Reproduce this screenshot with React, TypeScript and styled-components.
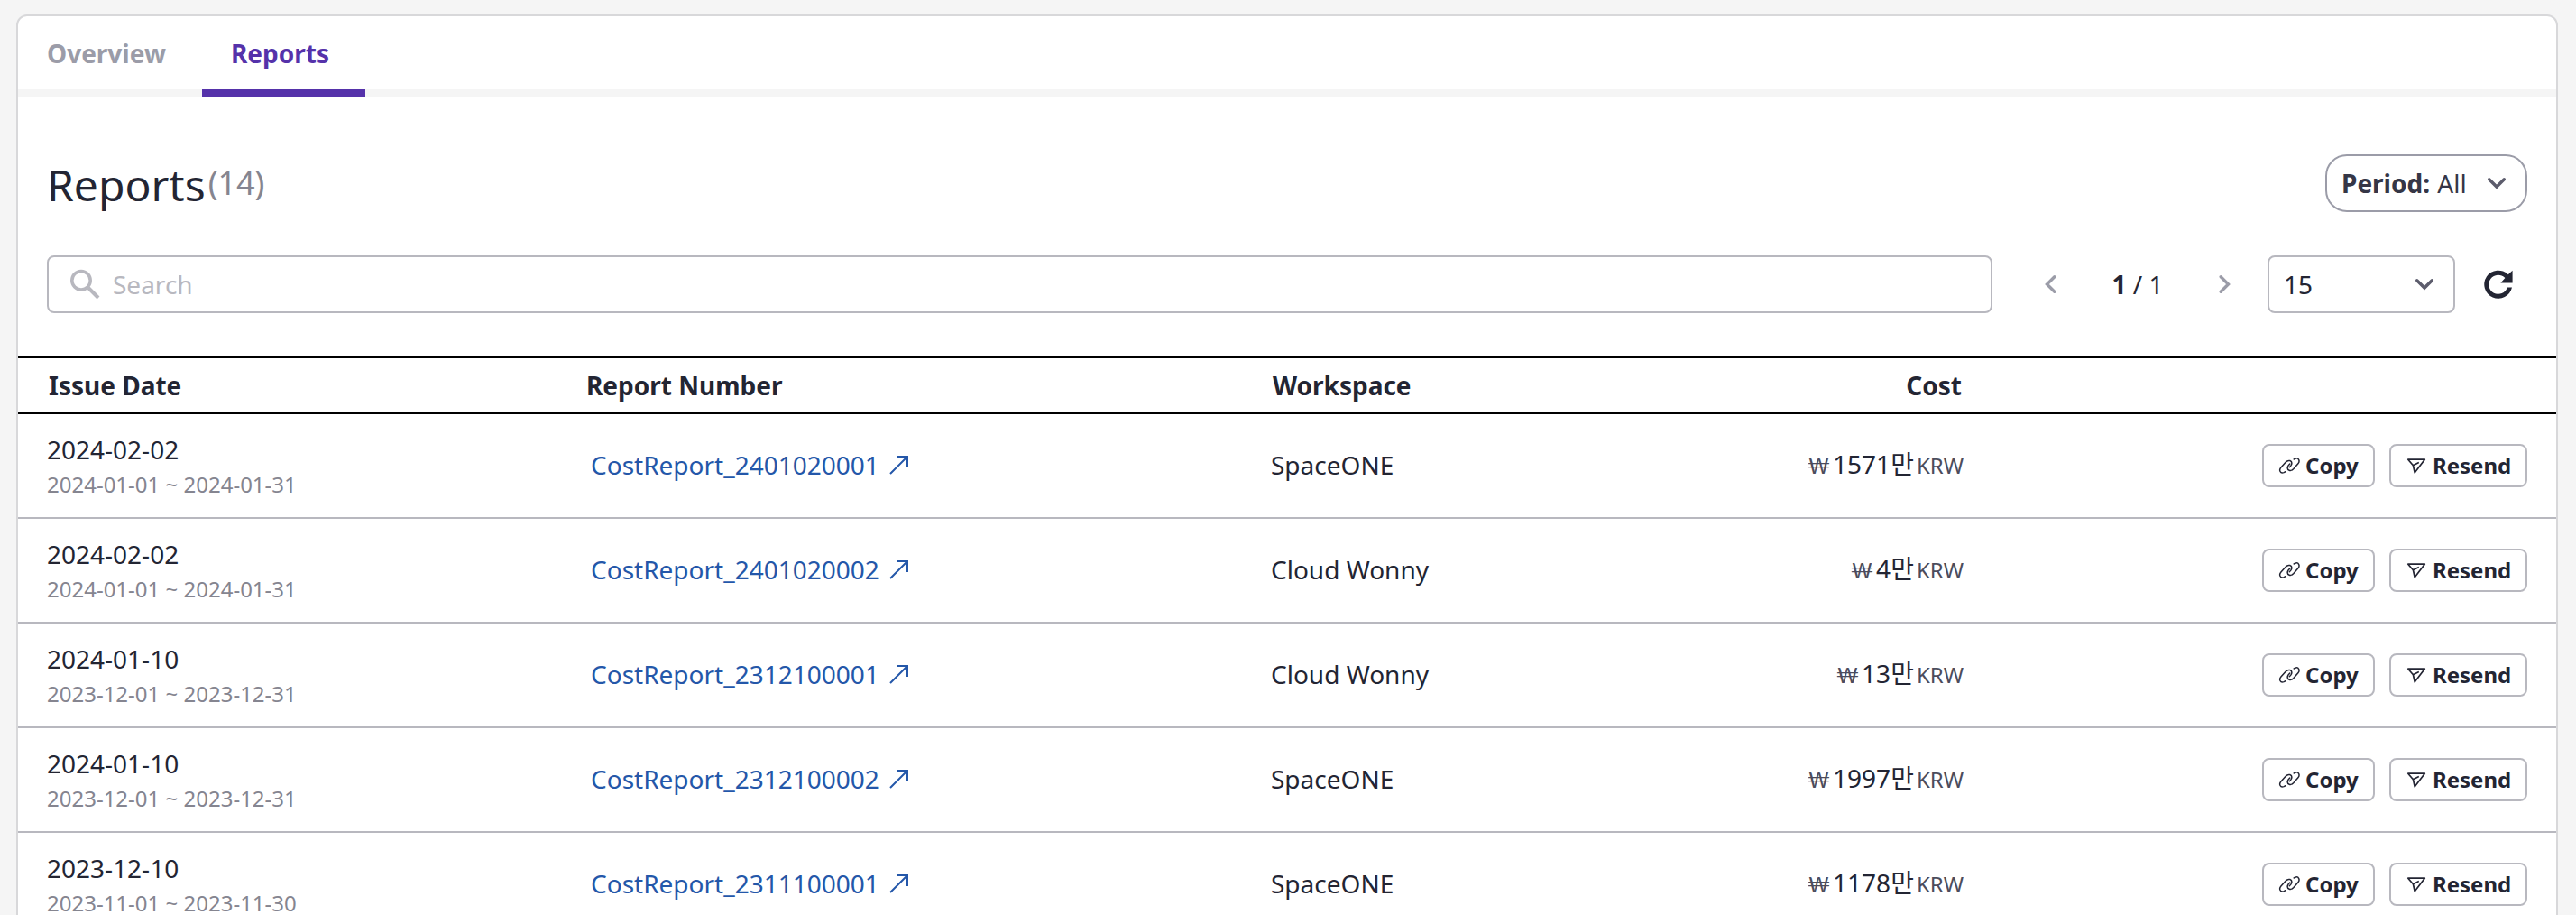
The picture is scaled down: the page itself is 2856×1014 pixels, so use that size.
import React from 'react';
import styled, { createGlobalStyle } from 'styled-components';

const GlobalStyle = createGlobalStyle`
  * { box-sizing: border-box; }
  body {
    margin: 0;
    background: #f5f5f5;
    font-family: "Noto Sans", "Noto Sans CJK KR", sans-serif;
    font-size: 28px;
    color: #232533;
  }
`;

const Page = styled.div`
  height: 1014px;
  padding: 16px 20px 0 18px;
  overflow: hidden;
`;

const Card = styled.main`
  height: 1100px;
  border: 2px solid #d8d8da;
  border-radius: 12px;
  background: #fff;
  overflow: hidden;
`;

const TabBar = styled.nav`
  display: flex;
  height: 89px;
  box-shadow: inset 0 -8px 0 #f5f5f5;
`;

const Tab = styled.button<{ $active?: boolean; $width: number }>`
  width: ${(p) => p.$width}px;
  padding: 0 0 0 32px;
  border: 0;
  border-bottom: 8px solid ${(p) => (p.$active ? '#5532aa' : 'transparent')};
  background: none;
  color: ${(p) => (p.$active ? '#5532aa' : '#9b9ca8')};
  font: 700 28px/44px "Noto Sans", sans-serif;
  text-align: left;
`;

const Heading = styled.header`
  display: flex;
  align-items: center;
  justify-content: space-between;
  height: 64px;
  margin: 64px 32px 0;
`;

const Title = styled.h1`
  display: flex;
  align-items: flex-start;
  height: 60px;
  margin: 0;
  font-weight: 400;
  font-size: 48px;
  line-height: 60px;
`;

const TitleText = styled.span`
  padding-top: 2px;
`;

const Count = styled.span`
  margin-left: 3px;
  color: #858590;
  font-size: 36px;
`;

const PeriodButton = styled.button`
  display: flex;
  align-items: center;
  justify-content: space-between;
  width: 224px;
  height: 64px;
  padding: 0 21px 0 16px;
  border: 2px solid #9b9ca8;
  border-radius: 24px;
  background: #fff;
  color: #353646;
  font: 400 28px/40px "Noto Sans", sans-serif;
`;

const PeriodLabel = styled.b`
  margin-right: 1px;
`;

const Toolbar = styled.div`
  display: flex;
  align-items: center;
  height: 64px;
  margin: 48px 32px 0;
`;

const SearchBox = styled.div`
  display: flex;
  align-items: center;
  width: 2157px;
  height: 64px;
  padding-left: 24px;
  gap: 13px;
  border: 2px solid #b8b8bf;
  border-radius: 8px;
  color: #b8b8bf;
`;

const Pager = styled.div`
  display: flex;
  align-items: center;
  justify-content: space-between;
  width: 206px;
  margin: 0 41px 0 58px;
`;

const PageSize = styled.div`
  display: flex;
  align-items: center;
  justify-content: space-between;
  width: 208px;
  height: 64px;
  padding: 0 21px 0 16px;
  border: 2px solid #b8b8bf;
  border-radius: 8px;
`;

const RefreshButton = styled.button`
  display: flex;
  margin-left: 24px;
  padding: 0;
  border: 0;
  background: none;
`;

const Row = styled.div<{ $head?: boolean }>`
  display: grid;
  grid-template-columns: 596px 761px 559px 214px 1fr;
  align-items: center;
  height: ${(p) => (p.$head ? 64 : 116)}px;
  margin-top: ${(p) => (p.$head ? 48 : 0)}px;
  padding: 0 32px;
  border: 0 solid ${(p) => (p.$head ? '#000' : '#b8b8bf')};
  border-width: ${(p) => (p.$head ? '2px 0' : '0 0 2px')};
  font-weight: ${(p) => (p.$head ? 700 : 400)};
  line-height: 40px;
`;

const HeadCell = styled.span<{ $right?: boolean }>`
  padding: ${(p) => (p.$right ? '0 7px 0 0' : '0 0 0 2px')};
  text-align: ${(p) => (p.$right ? 'right' : 'left')};
`;

const DateCell = styled.div`
  display: flex;
  flex-direction: column;
`;

const DateRange = styled.span`
  color: #858590;
  font-size: 24px;
  line-height: 37px;
`;

const ReportLink = styled.a`
  display: flex;
  align-items: center;
  gap: 9px;
  padding: 0 0 2px 7px;
  color: #2457a9;
`;

const Workspace = styled.span`
  padding-bottom: 2px;
`;

const CostCell = styled.div`
  display: flex;
  justify-content: flex-end;
  align-items: baseline;
  gap: 3px;
  padding: 0 5px 2px 0;
`;

const Unit = styled.span`
  color: #4c4c5c;
  font-size: 24px;
`;

const CurrencySymbol = styled(Unit)`
  font-family: Lato, "Noto Sans", sans-serif;
`;

const Actions = styled.div`
  display: flex;
  justify-content: flex-end;
  gap: 16px;
`;

const ActionButton = styled.button<{ $width: number }>`
  display: flex;
  align-items: center;
  width: ${(p) => p.$width}px;
  height: 48px;
  padding: 0 0 0 16px;
  gap: 6px;
  border: 2px solid #b8b8bf;
  border-radius: 8px;
  background: #fff;
  color: #232533;
  font: 700 24px/36px "Noto Sans", sans-serif;
`;

const Chevron = ({ d, w, h, color }: { d: string; w: number; h: number; color: string }) => (
  <svg width={w} height={h} viewBox={`0 0 ${w} ${h}`} fill="none" stroke={color} strokeWidth="3.4" strokeLinecap="round">
    <path d={d} />
  </svg>
);

const DownIcon = () => <Chevron d="M2.7 2.7L11 11L19.3 2.7" w={22} h={14} color="#5c5c6c" />;

const SearchIcon = () => (
  <svg width="34" height="34" viewBox="0 0 34 34" fill="none" stroke="#b8b8bf" strokeWidth="3.6">
    <circle cx="12" cy="12.8" r="10.2" />
    <path d="M20 21L31 32" strokeWidth="4" />
  </svg>
);

const RefreshIcon = () => (
  <svg width="48" height="48" viewBox="0 0 24 24" fill="#232533">
    <path d="M19.5 13.8A7.78 7.78 0 1 1 17.4 6.6L19.8 4.4V11.3H13.2L15.7 8.5A5.27 5.27 0 1 0 16.9 13.8Z" />
  </svg>
);

const ExternalIcon = () => (
  <svg width="24" height="24" viewBox="0 0 24 24" fill="none" stroke="#2457a9" strokeWidth="2">
    <path d="M3 22L22 3M10 3H22V15" />
  </svg>
);

const CopyIcon = () => (
  <svg width="24" height="24" viewBox="0 0 24 24" fill="none" stroke="#232533" strokeWidth="1.5" strokeLinecap="round">
    <path d="M7.8 18.8L6.1 19.6C2.1 21.2 .3 16.9 2.9 14L8.1 8.2C11.1 5 15.6 6.4 14.7 10.3C14.4 11.6 13.5 12.6 12.3 13.7" />
    <path d="M17.2 5L18.7 4.2C22.5 2.6 24.3 6.9 21.9 9.8L16.9 15.6C13.9 18.8 9.4 17.4 10.3 13.5C10.6 12.2 11.5 11.2 12.7 10.1" />
  </svg>
);

const SendIcon = () => (
  <svg width="24" height="24" viewBox="0 0 24 24" fill="none" stroke="#232533" strokeWidth="1.7" strokeLinejoin="round">
    <path d="M2.8 5.2H21.3L10.2 19.8L8.4 11.8ZM8.4 11.8L14.8 8.6" />
  </svg>
);

const reports = [
  { date: '2024-02-02', range: '2024-01-01 ~ 2024-01-31', id: 'CostReport_2401020001', workspace: 'SpaceONE', cost: '1571만' },
  { date: '2024-02-02', range: '2024-01-01 ~ 2024-01-31', id: 'CostReport_2401020002', workspace: 'Cloud Wonny', cost: '4만' },
  { date: '2024-01-10', range: '2023-12-01 ~ 2023-12-31', id: 'CostReport_2312100001', workspace: 'Cloud Wonny', cost: '13만' },
  { date: '2024-01-10', range: '2023-12-01 ~ 2023-12-31', id: 'CostReport_2312100002', workspace: 'SpaceONE', cost: '1997만' },
  { date: '2023-12-10', range: '2023-11-01 ~ 2023-11-30', id: 'CostReport_2311100001', workspace: 'SpaceONE', cost: '1178만' },
];

export default function App() {
  return (
    <>
      <GlobalStyle />
      <Page>
        <Card>
          <TabBar>
            <Tab $width={204}>Overview</Tab>
            <Tab $width={181} $active>Reports</Tab>
          </TabBar>
          <Heading>
            <Title><TitleText>Reports</TitleText><Count>(14)</Count></Title>
            <PeriodButton>
              <span><PeriodLabel>Period:</PeriodLabel> All</span>
              <DownIcon />
            </PeriodButton>
          </Heading>
          <Toolbar>
            <SearchBox><SearchIcon />Search</SearchBox>
            <Pager>
              <Chevron d="M10.8 2.7L2.5 11L10.8 19.3" w={13} h={22} color="#9b9ca8" />
              <span><b>1</b> / 1</span>
              <Chevron d="M2.2 2.7L10.5 11L2.2 19.3" w={13} h={22} color="#9b9ca8" />
            </Pager>
            <PageSize>15<DownIcon /></PageSize>
            <RefreshButton><RefreshIcon /></RefreshButton>
          </Toolbar>
          <Row $head>
            <HeadCell>Issue Date</HeadCell>
            <HeadCell>Report Number</HeadCell>
            <HeadCell>Workspace</HeadCell>
            <HeadCell $right>Cost</HeadCell>
          </Row>
          {reports.map((r) => (
            <Row key={r.id}>
              <DateCell>{r.date}<DateRange>{r.range}</DateRange></DateCell>
              <ReportLink>{r.id}<ExternalIcon /></ReportLink>
              <Workspace>{r.workspace}</Workspace>
              <CostCell><CurrencySymbol>₩</CurrencySymbol>{r.cost}<Unit>KRW</Unit></CostCell>
              <Actions>
                <ActionButton $width={125}><CopyIcon />Copy</ActionButton>
                <ActionButton $width={153}><SendIcon />Resend</ActionButton>
              </Actions>
            </Row>
          ))}
        </Card>
      </Page>
    </>
  );
}
